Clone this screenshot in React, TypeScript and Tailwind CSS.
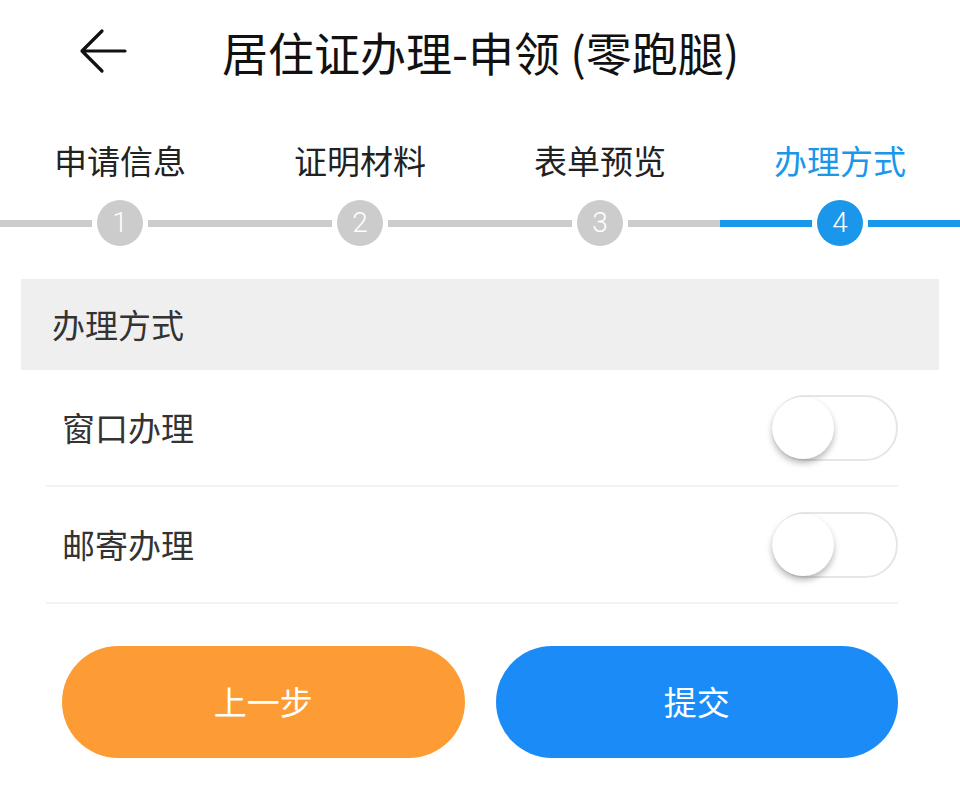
import React from "react";

const steps = ["申请信息", "证明材料", "表单预览", "办理方式"];

const Toggle: React.FC = () => (
  <div className="relative h-[66px] w-[126px] rounded-full border-2 border-[#e6e6e6] bg-white">
    <div className="absolute left-[-2px] top-[0px] h-[62px] w-[62px] rounded-full bg-white shadow-[0_4px_6px_rgba(0,0,0,0.28)]" />
  </div>
);

export default function App() {
  const active = 3;

  return (
    <div
      className="h-[806px] w-[960px] bg-white"
      style={{ fontFamily: '"Noto Sans CJK SC", "Noto Sans", sans-serif' }}
    >
      {/* header */}
      <div className="flex h-[102px] items-center">
        <div className="ml-[78px] flex h-[52px] w-[52px] items-center">
          <svg width="50" height="50" viewBox="0 0 50 50" fill="none">
            <path
              d="M47 25H5M24 5L4 25l20 20"
              stroke="#111"
              strokeWidth="3.2"
              strokeLinecap="round"
              strokeLinejoin="round"
            />
          </svg>
        </div>
        <h1 className="ml-[92px] text-[46px] leading-none text-[#111]">
          居住证办理-申领 (零跑腿)
        </h1>
      </div>

      {/* steps */}
      <div className="mt-[38px] grid grid-cols-4">
        {steps.map((s, i) => (
          <div
            key={s}
            className={`text-center text-[33px] leading-[40px] ${
              i === active ? "text-[#1a96ea]" : "text-[#222]"
            }`}
          >
            {s}
          </div>
        ))}
      </div>
      <div className="mt-[20px] grid grid-cols-4">
        {steps.map((s, i) => (
          <div key={s} className="flex items-center">
            <div
              className={`h-[7px] flex-1 ${
                i >= active ? "bg-[#1a96ea]" : "bg-[#cccccc]"
              }`}
            />
            <div
              className={`mx-[5px] flex h-[46px] w-[46px] items-center justify-center rounded-full text-[28px] font-light leading-none text-white ${
                i === active ? "bg-[#1a96ea]" : "bg-[#cccccc]"
              }`}
              style={{ fontFamily: 'Roboto, "Liberation Sans", sans-serif' }}
            >
              {i + 1}
            </div>
            <div
              className={`h-[7px] flex-1 ${
                i >= active ? "bg-[#1a96ea]" : "bg-[#cccccc]"
              }`}
            />
          </div>
        ))}
      </div>

      {/* section */}
      <div className="mx-[21px] mt-[33px] flex h-[91px] items-center bg-[#efefef] pl-[31px]">
        <span className="text-[33px] text-[#333]">办理方式</span>
      </div>

      <div className="ml-[46px] mr-[62px]">
        {["窗口办理", "邮寄办理"].map((t) => (
          <div
            key={t}
            className="flex h-[117px] items-center justify-between border-b-2 border-[#f2f2f2] pl-[16px]"
          >
            <span className="text-[33px] text-[#333]">{t}</span>
            <Toggle />
          </div>
        ))}
      </div>

      {/* buttons */}
      <div className="mt-[42px] flex gap-[31px] px-[62px]">
        <button className="flex h-[112px] flex-1 items-center justify-center rounded-full bg-[#fd9b34] text-[33px] text-white">
          上一步
        </button>
        <button className="flex h-[112px] flex-1 items-center justify-center rounded-full bg-[#1b8cf7] text-[33px] text-white">
          提交
        </button>
      </div>
    </div>
  );
}
